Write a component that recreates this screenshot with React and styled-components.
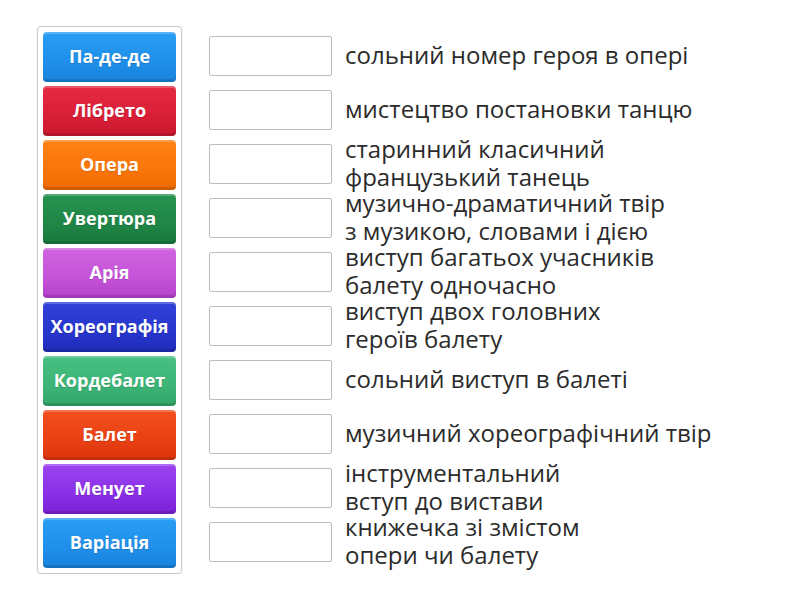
import React from "react";
import styled, { createGlobalStyle } from "styled-components";

const Global = createGlobalStyle`
  html, body { margin: 0; padding: 0; background: #fff; }
  body { font-family: "Open Sans", "Noto Sans", sans-serif; }
`;

const Page = styled.div`
  display: flex;
  align-items: flex-start;
  padding: 26px 0 0 37px;
  gap: 27px;
`;

const Panel = styled.div`
  display: flex;
  flex-direction: column;
  gap: 4px;
  padding: 5px;
  border: 1px solid #c8c8c8;
  border-radius: 4px;
  box-shadow: 0 1px 2px rgba(0,0,0,0.08);
`;

const Tile = styled.div`
  width: 133px;
  height: 50px;
  box-sizing: border-box;
  padding-bottom: 3px;
  display: flex;
  align-items: center;
  justify-content: center;
  border-radius: 4px;
  color: #fff;
  font-weight: 700;
  font-size: 18px;
  background: linear-gradient(180deg, ${p => p.$top} 0%, ${p => p.$mid} 60%, ${p => p.$bot} 100%);
  box-shadow: inset 0 2px 0 rgba(255,255,255,0.22), inset 0 -3px 0 rgba(0,0,0,0.12);
  text-shadow: 0 1px 1px rgba(0,0,0,0.15);
`;

const Answers = styled.div`
  display: flex;
  flex-direction: column;
  gap: 4px;
  padding-top: 5px;
`;

const Row = styled.div`
  height: 50px;
  display: flex;
  align-items: center;
  gap: 13px;
`;

const Slot = styled.div`
  width: 123px;
  height: 40px;
  box-sizing: border-box;
  border: 1px solid #bdbdbd;
  border-radius: 2px;
  background: #fff;
  flex: none;
  margin-top: -1px;
`;

const Label = styled.div`
  font-size: 24px;
  line-height: 28px;
  color: #2b2b2b;
  white-space: nowrap;
  margin-top: -3px;
`;

const tiles = [
  ["Па-де-де", "#2a9ef5", "#1f8fe9", "#1783dc"],
  ["Лібрето", "#e52a42", "#d91f37", "#c8182e"],
  ["Опера", "#ff8214", "#f97508", "#ec6a00"],
  ["Увертюра", "#27924f", "#1f8646", "#19783e"],
  ["Арія", "#cf64de", "#c553d8", "#b53fcb"],
  ["Хореографія", "#3142da", "#2736cc", "#1f2cba"],
  ["Кордебалет", "#48c083", "#3cb476", "#33a569"],
  ["Балет", "#f2501e", "#ea4014", "#dc330c"],
  ["Менует", "#9c44f0", "#8a2fe6", "#7a22d6"],
  ["Варіація", "#2a9ef5", "#1f8fe9", "#1783dc"],
];

const answers = [
  ["сольний номер героя в опері"],
  ["мистецтво постановки танцю"],
  ["старинний класичний", "французький танець"],
  ["музично-драматичний твір", "з музикою, словами і дією"],
  ["виступ багатьох учасників", "балету одночасно"],
  ["виступ двох головних", "героїв балету"],
  ["сольний виступ в балеті"],
  ["музичний хореографічний твір"],
  ["інструментальний", "вступ до вистави"],
  ["книжечка зі змістом", "опери чи балету"],
];

export default function App() {
  return (
    <>
      <Global />
      <Page>
        <Panel>
          {tiles.map(([t, a, b, c]) => (
            <Tile key={t} $top={a} $mid={b} $bot={c}>{t}</Tile>
          ))}
        </Panel>
        <Answers>
          {answers.map((lines, i) => (
            <Row key={i}>
              <Slot />
              <Label>
                {lines.map((l, j) => (
                  <div key={j}>{l}</div>
                ))}
              </Label>
            </Row>
          ))}
        </Answers>
      </Page>
    </>
  );
}
